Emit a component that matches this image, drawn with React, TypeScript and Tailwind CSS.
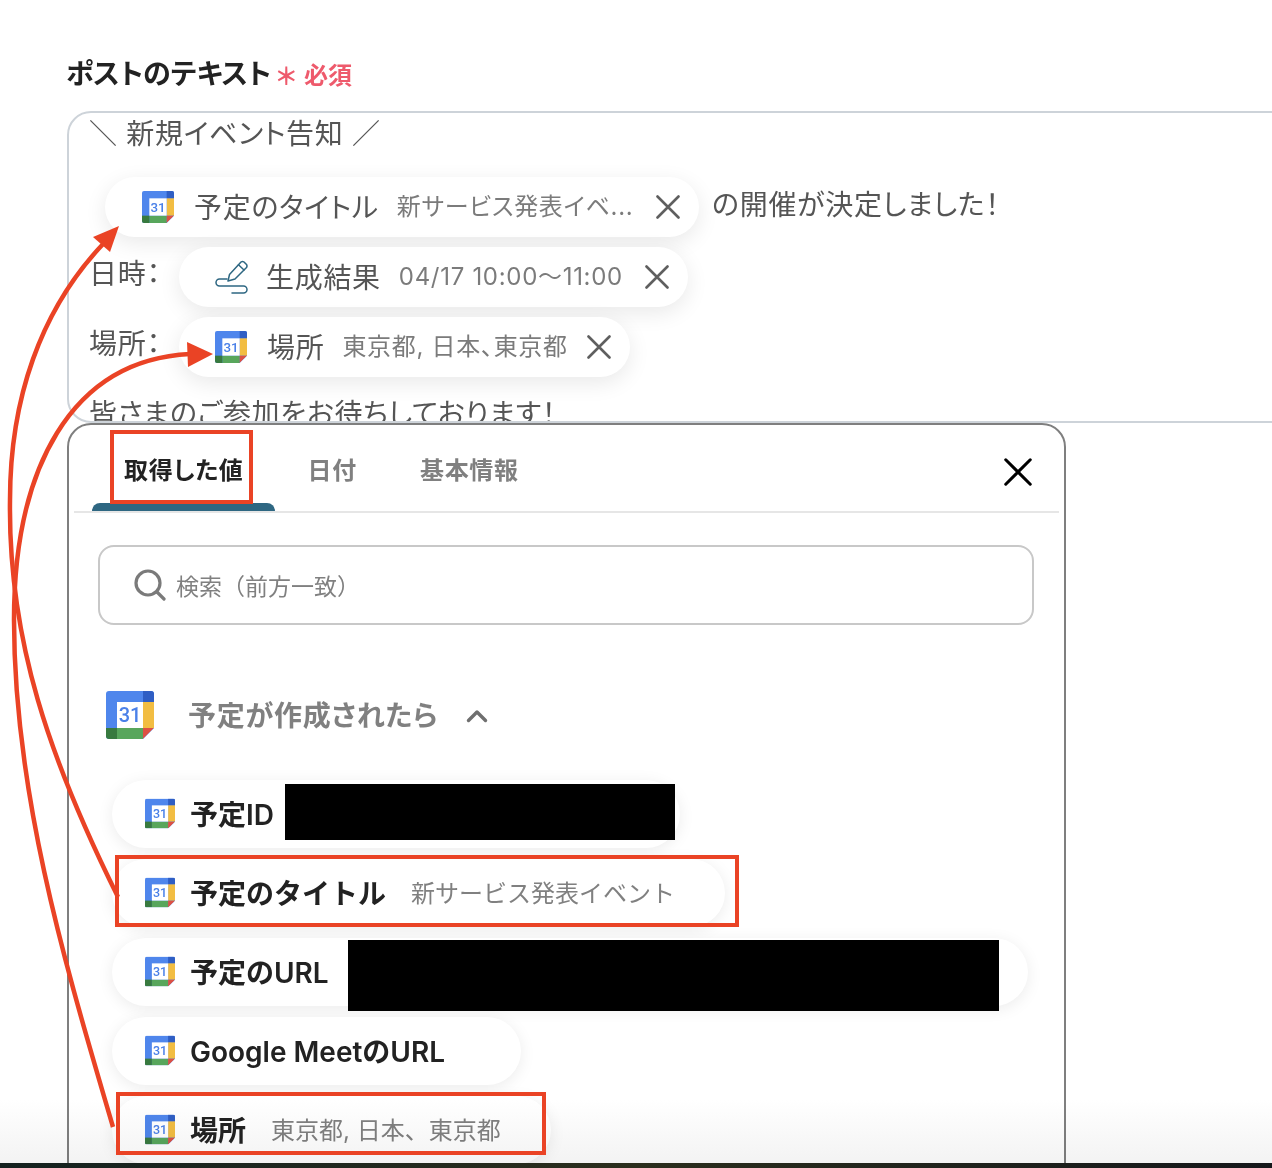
import React from "react";

const FONT = '"Inter","Noto Sans CJK JP","Noto Sans",sans-serif';

function Cal({ cls, id }: { cls: string; id: string }) {
  return (
    <svg viewBox="0 0 48 48" className={cls} aria-hidden="true">
      <defs>
        <clipPath id={id}>
          <path d="M3 0H45a3 3 0 0 1 3 3V37L37 48H3a3 3 0 0 1-3-3V3a3 3 0 0 1 3-3Z" />
        </clipPath>
      </defs>
      <g clipPath={`url(#${id})`}>
        <rect width="48" height="48" fill="#4f86ec" />
        <rect x="37" width="11" height="11" fill="#2f5ec4" />
        <rect x="37" y="11" width="11" height="26" fill="#f2bd42" />
        <rect x="11" y="37" width="26" height="11" fill="#58a65c" />
        <rect y="37" width="11" height="11" fill="#387a3f" />
        <path d="M37 37H48L37 48Z" fill="#dd5144" />
        <rect x="11" y="11" width="26" height="26" fill="#ffffff" />
      </g>
      <text x="24" y="31" textAnchor="middle" fontSize="20" fontWeight="500" fill="#4a80e8" fontFamily="Roboto, sans-serif" letterSpacing="0">31</text>
    </svg>
  );
}

function Pen() {
  return (
    <svg viewBox="0 0 34 34" className="w-[34px] h-[34px] shrink-0" fill="none" stroke="#2e6782" strokeWidth="1.5" strokeLinecap="round" strokeLinejoin="round" aria-hidden="true">
      <path d="M13 21 14.5 14.5 26 2Q27.5.8 29 2L31.5 4.5Q32.5 6 31.5 7.5L20 19Z" />
      <path d="M23.5 4.8 29 10" />
      <path d="M12 19H4.5A3.5 3.5 0 0 0 4.5 26H28.5A3.5 3.5 0 0 1 28.5 33H17" />
    </svg>
  );
}

function Close({ cls }: { cls: string }) {
  return (
    <svg viewBox="0 0 24 24" className={cls} fill="none" stroke="currentColor" strokeWidth="2.6" strokeLinecap="round" aria-hidden="true">
      <path d="M1.5 1.5 22.5 22.5M22.5 1.5 1.5 22.5" />
    </svg>
  );
}

function FieldPill({ w, pl, icon, label, value, gap }: { w: string; pl: string; icon: React.ReactNode; label: string; value: string; gap: string }) {
  return (
    <div className={`${w} ${pl} relative h-[60px] shrink-0 flex items-center rounded-full bg-white shadow-[0_6px_22px_rgba(0,0,0,0.09)]`}>
      {icon}
      <span className={`${gap} mt-[1px] text-[28px] text-[#555555] whitespace-nowrap`}>{label}</span>
      <span className="ml-[18px] text-[24px] text-[#7b7b7b] whitespace-nowrap">{value}</span>
      <Close cls="ml-auto mr-[19px] w-[24px] h-[24px] text-[#5f5f5f]" />
    </div>
  );
}

function ListPill({ w, label, value, gap, id, children }: { w: string; label: string; value?: string; gap?: string; id: string; children?: React.ReactNode }) {
  return (
    <div className={`${w} relative h-[68px] flex items-center pl-[33px] rounded-full bg-white shadow-[0_3px_16px_rgba(0,0,0,0.08)] tracking-normal [font-feature-settings:normal]`}>
      <Cal id={id} cls="w-[30px] h-[31px] shrink-0 mb-[2px]" />
      <span className="ml-[15px] mt-[2px] text-[28px] font-semibold text-[#222222] whitespace-nowrap">{label}</span>
      {value && <span className={`${gap} mt-[2px] text-[24px] text-[#808080] whitespace-nowrap`}>{value}</span>}
      {children}
    </div>
  );
}

export default function App() {
  return (
    <div className="relative w-[1272px] h-[1168px] overflow-hidden bg-white tracking-[0.7px] [font-feature-settings:'palt']" style={{ fontFamily: FONT }}>
      <div className="ml-[66px] pt-[54px] h-[111px] flex items-start">
        <span className="text-[28px] leading-[40px] font-bold text-[#222222] tracking-normal">ポストのテキスト</span>
        <span className="ml-[3px] mt-[3px] text-[24px] leading-[40px] font-bold text-[#ee5a6c] [font-feature-settings:normal]">＊</span>
        <span className="ml-[5px] mt-[2px] text-[24px] leading-[40px] font-semibold text-[#ee5a6c] tracking-normal [font-feature-settings:normal]">必須</span>
      </div>

      <div className="ml-[67px] w-[1300px] h-[312px] overflow-hidden rounded-[24px] border-2 border-[#cdd3d9] text-[28px] text-[#555555]">
        <div className="pl-[20px] h-[39px] leading-[43px] whitespace-nowrap">＼ 新規イベント告知 ／</div>
        <div className="mt-[25px] ml-[36px] flex items-center">
          <FieldPill w="w-[594px]" pl="pl-[37px]" gap="ml-[20px]" icon={<Cal id="c1" cls="w-[32px] h-[32px] shrink-0" />} label="予定のタイトル" value="新サービス発表イベ..." />
          <span className="ml-[13px] mb-[4px] whitespace-nowrap">の開催が決定しました！</span>
        </div>
        <div className="mt-[10px] ml-[20px] flex items-center">
          <span className="w-[90px] mb-[7px] whitespace-nowrap">日時：</span>
          <FieldPill w="w-[509px]" pl="pl-[36px]" gap="ml-[17px]" icon={<Pen />} label="生成結果" value="04/17 10:00〜11:00" />
        </div>
        <div className="mt-[10px] ml-[20px] flex items-center">
          <span className="w-[90px] mb-[7px] whitespace-nowrap">場所：</span>
          <FieldPill w="w-[451px]" pl="pl-[36px]" gap="ml-[20px]" icon={<Cal id="c2" cls="w-[32px] h-[32px] shrink-0" />} label="場所" value="東京都, 日本、東京都" />
        </div>
        <div className="mt-[17px] ml-[20px] leading-[40px] whitespace-nowrap">皆さまのご参加をお待ちしております！</div>
      </div>

      <div className="relative ml-[67px] w-[999px] h-[800px] rounded-t-[24px] border-2 border-[#7f7f7f] bg-white">
        <div className="relative mx-[5px] h-[88px] pt-[6px] border-b-2 border-[#e6e6e6] flex items-center text-[24px] font-semibold text-[#808080]">
          <span className="ml-[50px] font-bold text-[#222222]">取得した値</span>
          <span className="ml-[64px]">日付</span>
          <span className="ml-[63px]">基本情報</span>
          <Close cls="absolute right-[27px] top-[33px] w-[28px] h-[28px] text-black" />
          <div className="absolute left-[18px] bottom-0 w-[183px] h-[8px] rounded-t-[8px] bg-[#2e6782]" />
        </div>

        <div className="ml-[29px] mt-[32px] w-[936px] h-[80px] rounded-[16px] border-2 border-[#c8c8c8] flex items-center pl-[34px] text-[23px] text-[#808080] tracking-normal [font-feature-settings:normal]">
          <svg viewBox="0 0 32 32" className="w-[32px] h-[32px] shrink-0" fill="none" stroke="#7a7a7a" strokeWidth="3.2" strokeLinecap="round" aria-hidden="true">
            <circle cx="14" cy="14" r="12" />
            <path d="M23 23 30 30" />
          </svg>
          <span className="ml-[10px] mt-[4px]">検索（前方一致）</span>
        </div>

        <div className="ml-[37px] mt-[66px] flex items-center">
          <Cal id="c3" cls="w-[48px] h-[48px] shrink-0" />
          <span className="ml-[34px] mt-[2px] text-[28px] font-semibold text-[#808080] whitespace-nowrap">予定が作成されたら</span>
          <svg viewBox="0 0 22 14" className="ml-[28px] mt-[2px] w-[22px] h-[14px]" fill="none" stroke="#6f6f6f" strokeWidth="3.4" strokeLinecap="round" strokeLinejoin="round" aria-hidden="true">
            <path d="M2.5 11.5 11 3l8.5 8.5" />
          </svg>
        </div>

        <div className="ml-[43px] mt-[41px] flex flex-col gap-[11px]">
          <ListPill id="l1" w="w-[568px]" label="予定ID">
            <div className="absolute left-[173px] top-[4px] w-[390px] h-[56px] bg-black" />
          </ListPill>
          <ListPill id="l2" w="w-[613px]" label="予定のタイトル" value="新サービス発表イベント" gap="ml-[25px]" />
          <ListPill id="l3" w="w-[916px]" label="予定のURL">
            <div className="absolute left-[236px] top-[2px] w-[651px] h-[71px] bg-black" />
          </ListPill>
          <ListPill id="l4" w="w-[409px]" label="Google MeetのURL" />
          <ListPill id="l5" w="w-[439px]" label="場所" value="東京都, 日本、東京都" gap="ml-[25px]" />
        </div>
      </div>

      <div className="absolute left-0 right-0 top-[1100px] h-[64px] bg-linear-to-b from-white to-[#f3f3f3] mix-blend-multiply" />
      <div className="absolute left-0 right-0 bottom-0 h-[5px] bg-linear-to-r from-[#14211f] via-[#2b2e1d] to-[#15171a]" />

      <div className="absolute left-[110px] top-[430px] w-[143px] h-[74px] border-4 border-[#ea4325]" />
      <div className="absolute left-[115px] top-[855px] w-[624px] h-[72px] border-4 border-[#ea4325]" />
      <div className="absolute left-[116px] top-[1092px] w-[430px] h-[63px] border-4 border-[#ea4325]" />

      <svg viewBox="0 0 1272 1168" className="absolute left-0 top-0 w-[1272px] h-[1168px] pointer-events-none" fill="none" aria-hidden="true">
        <path d="M118 897C50 760 8 640 10 500 10 400 40 310 104 243" stroke="#ea4325" strokeWidth="4.5" />
        <path d="M119 226 93 237 110 252Z" fill="#ea4325" />
        <path d="M113 1127C70 980 14 800 14 620 14 470 70 360 190 354" stroke="#ea4325" strokeWidth="4.5" />
        <path d="M213 354 187 342 188 367Z" fill="#ea4325" />
      </svg>
    </div>
  );
}
